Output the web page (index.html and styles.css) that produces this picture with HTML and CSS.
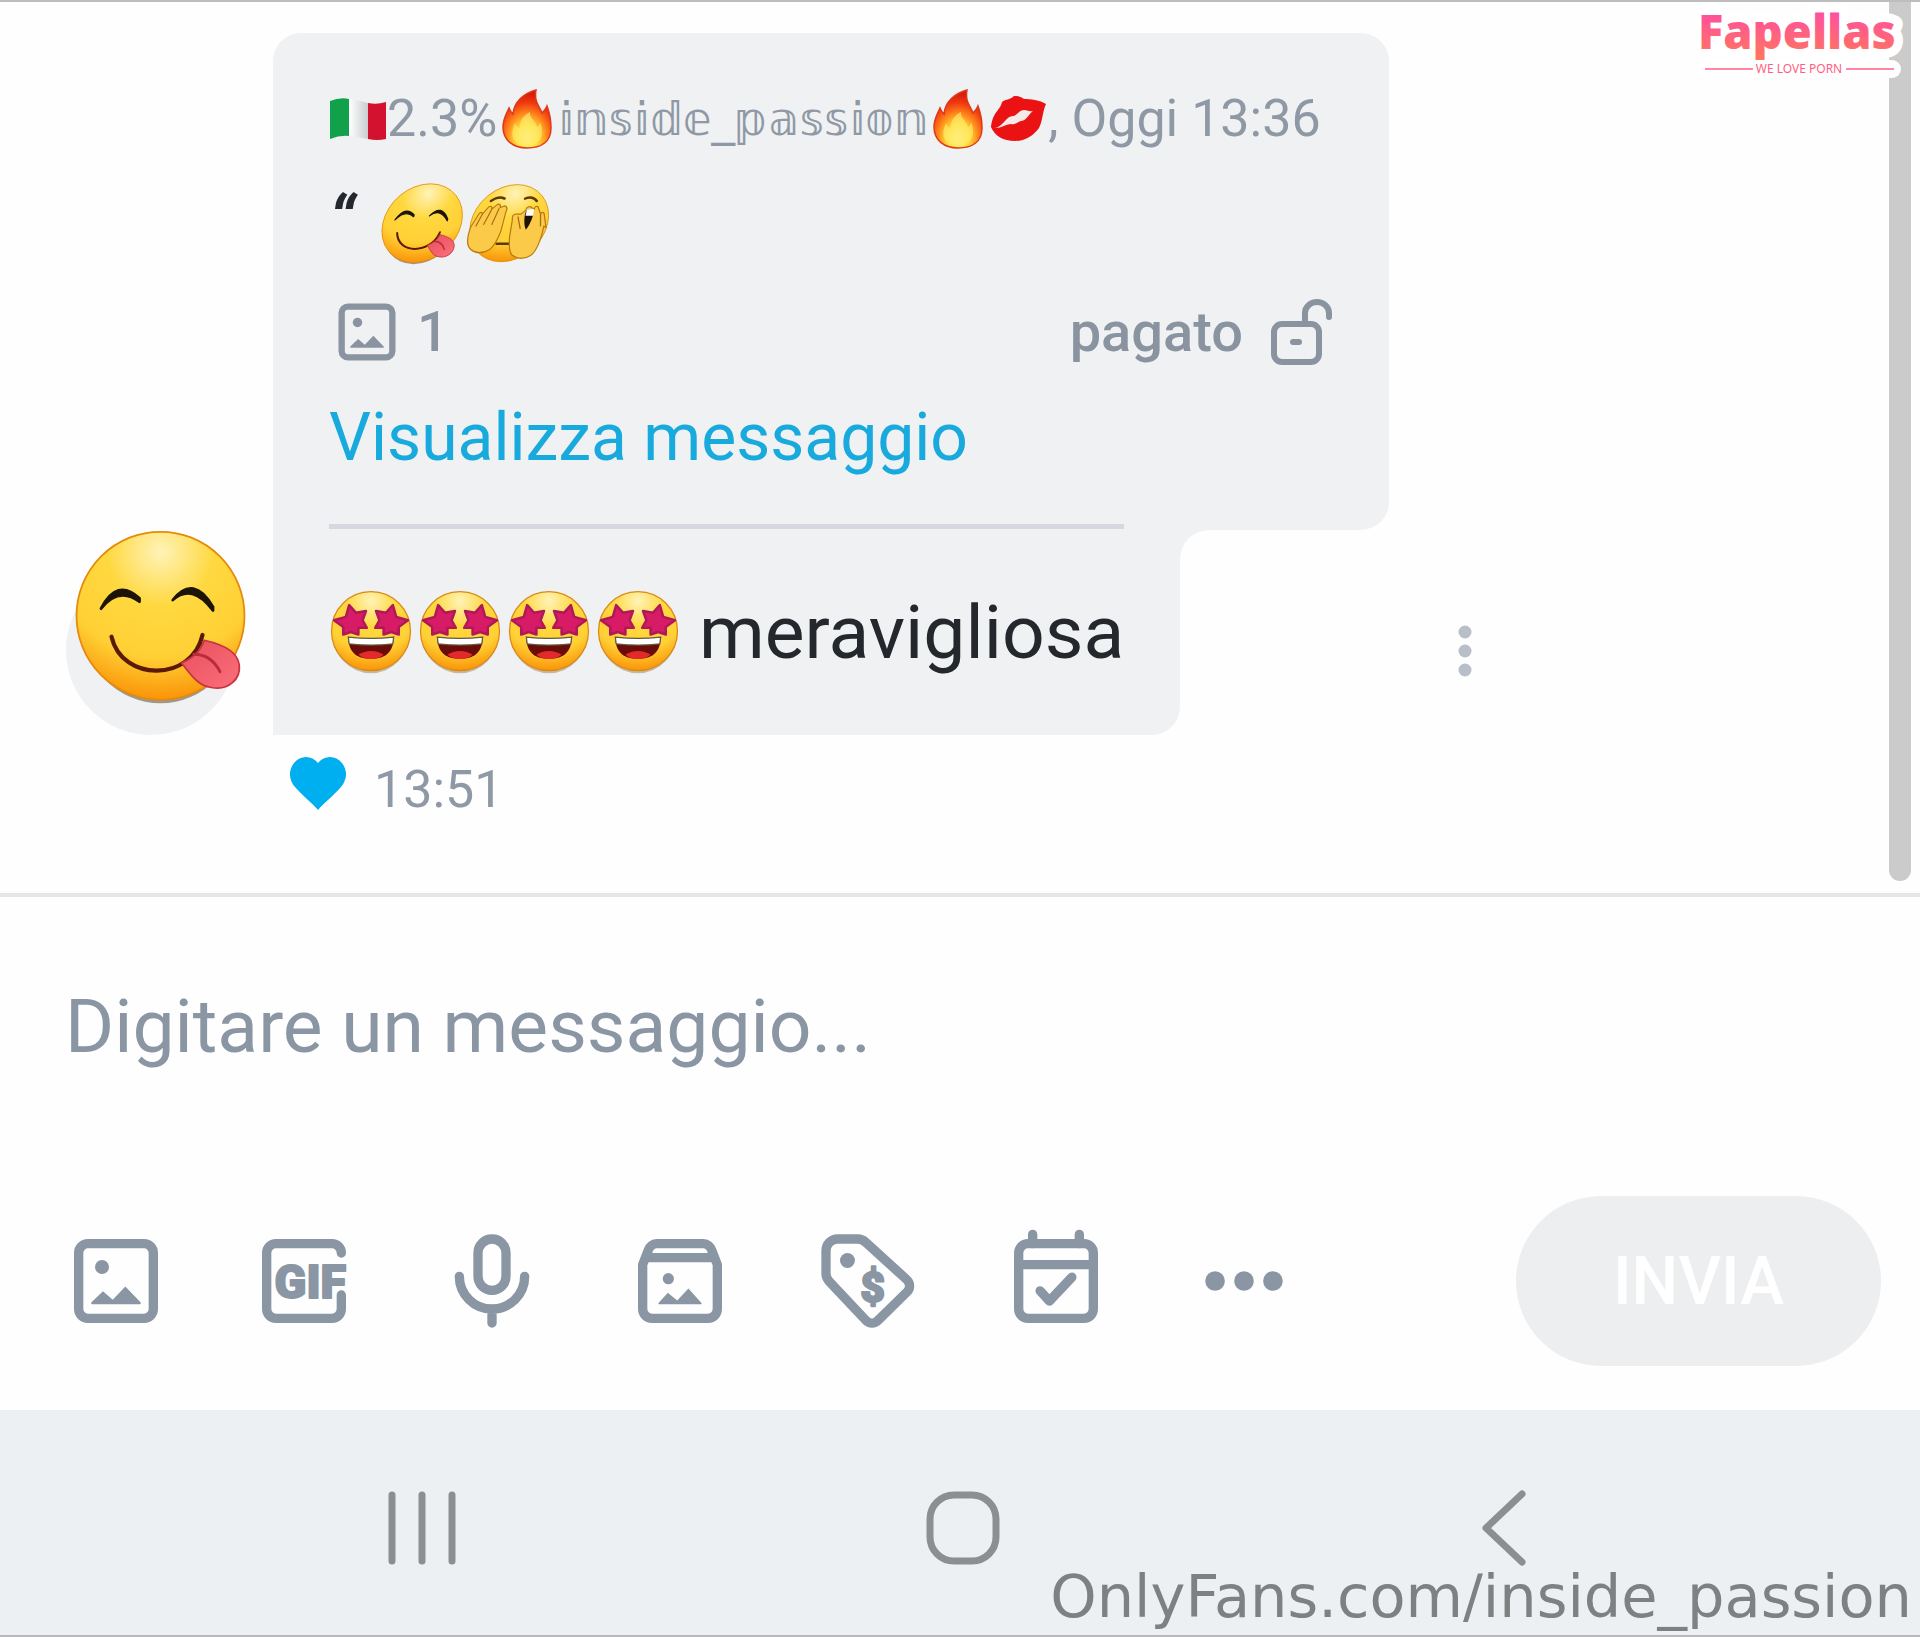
FILE: index.html
```html
<!DOCTYPE html>
<html lang="it">
<head>
  <meta charset="UTF-8">
  <meta name="viewport" content="width=device-width, initial-scale=1.0">
  <title>Messaggi</title>
  <link rel="stylesheet" href="styles.css">
</head>
<body>
  <!-- shared drawings -->
  <svg class="sprite" width="0" height="0" aria-hidden="true">
    <defs>
      <radialGradient id="skin" cx="50%" cy="12%" r="92%">
        <stop offset="0" stop-color="#fff3b8"/>
        <stop offset=".35" stop-color="#ffd83f"/>
        <stop offset=".68" stop-color="#ffd035"/>
        <stop offset="1" stop-color="#f98a00"/>
      </radialGradient>
      <linearGradient id="tongue" x1="0" y1="0" x2="1" y2="1">
        <stop offset="0" stop-color="#e8505c"/>
        <stop offset="1" stop-color="#fa6f7b"/>
      </linearGradient>
      <radialGradient id="flame" cx="50%" cy="82%" r="75%">
        <stop offset="0" stop-color="#fff7a8"/>
        <stop offset=".3" stop-color="#ffe03a"/>
        <stop offset=".55" stop-color="#ff8a1c"/>
        <stop offset=".8" stop-color="#f13a10"/>
        <stop offset="1" stop-color="#d81e0a"/>
      </radialGradient>
      <linearGradient id="logo-pink" x1="0" y1="0" x2="0" y2="1">
        <stop offset=".2" stop-color="#ff4f9f"/>
        <stop offset=".9" stop-color="#ff7560"/>
      </linearGradient>
      <linearGradient id="flag-white" x1="0" y1="0" x2="1" y2="0">
        <stop offset="0" stop-color="#ffffff"/>
        <stop offset="1" stop-color="#c9cdd0"/>
      </linearGradient>
    </defs>
    <symbol id="yum" viewBox="0 0 100 100">
      <ellipse cx="50" cy="52" rx="45" ry="47" fill="#3c2810" opacity=".45"/>
      <circle cx="50" cy="49" r="48" fill="url(#skin)" stroke="#e58a0b"/>
      <path d="M16 45q9-18 22-6l0 2q-12-9-22 4ZM57 40q12-15 23 4l0 2q-12-16-23-6Z" fill="#1c1406" stroke="#1c1406" stroke-width="1.6" stroke-linejoin="round"/>
      <path d="M22 61c6 26 46 26 52-1" fill="none" stroke="#5b1a08" stroke-width="2.400" stroke-linecap="round"/>
      <path d="M75 63c-2 6-6 10-13 13 5 6 9 13 17 14 10 2 17-5 16-13-1-8-11-12-20-14Z" fill="url(#tongue)" stroke="#c9323f"/>
      <path d="M69 71c7 0 12 4 15 10" fill="none" stroke="#b82c3c" stroke-width="1.6" stroke-linecap="round"/>
    </symbol>
    <symbol id="peek" viewBox="0 0 100 100">
      <circle cx="50" cy="49" r="47" fill="url(#skin)" stroke="#d8900f"/>
      <path d="M22 22q8-7 16-3M63 19q8-4 15 3" fill="none" stroke="#5b3a08" stroke-width="3" stroke-linecap="round"/>
      <path d="M40 74h17" stroke="#5b3a08" stroke-width="3" stroke-linecap="round"/>
      <path d="M4 54l7-17q3-3 4 1l6-9q4-2 4 3l6-6q4-1 4 4l5-2q5 1 3 8l-1 22q-3 18-9 23-12 8-23 0-9-6-6-27Z" fill="#fbca48" stroke="#b87a10" stroke-width="1.5"/>
      <path d="M15 38l-5 15M25 33l-6 18M34 31l-5 20" fill="none" stroke="#a86c0e" stroke-width="1.5"/>
      <path d="M96 54l-6-17q-3-3-4 1l-5-9q-4-2-4 3l-5-3q-5-1-5 4l-5 5-6 0q-5 0-3 7l1 20q2 18 8 23 12 8 23 0 8-8 8-35Z" fill="#fbca48" stroke="#b87a10" stroke-width="1.5"/>
      <path d="M86 38l3 15M59 41l6 15" fill="none" stroke="#a86c0e" stroke-width="1.5"/>
      <path d="M69 32q8 0 8 8-1 11-5 17-4-6-5-17 0-7 2-8Z" fill="#1c1406"/>
      <path d="M68 32h9v8h-9Z" fill="#fff"/>
    </symbol>
    <symbol id="starstruck" viewBox="0 0 100 100">
      <ellipse cx="50" cy="52" rx="46" ry="47" fill="#7a4a10" opacity=".35"/>
      <circle cx="50" cy="49" r="47" fill="url(#skin)" stroke="#d98a14" stroke-width="1.5"/>
      <path d="M23 56q27 4 54 0c0 20-12 26-27 26S23 76 23 56Z" fill="#6a0d0a"/>
      <path d="M35 77c8-6 22-6 30 0-8 7-22 7-30 0Z" fill="#e32a2a"/>
      <path d="M23 56q27 3 54 0l-1 8q-26 3-52 0Z" fill="#fff" stroke="#5f5a3a" stroke-width="1.5"/>
      <g fill="#d81b67" stroke="#b01858" stroke-width="3" stroke-linejoin="round">
        <path d="M24 18l8 9 12-2-4 11 5 9-10 0 0 8-9-3-9 3 0-9-11-8 14-4Z"/>
        <path d="M76 18l-8 9-12-2 4 11-5 9 10 0 0 8 9-3 9 3 0-9 11-8-14-4Z"/>
      </g>
    </symbol>
    <symbol id="fire" viewBox="0 0 60 60">
      <path d="M39 1c-2 12 3 15 6 23 2-2 4-4 5-7 3 8 4 14 4 22 0 14-10 20-24 20S6 51 6 38c0-8 3-12 6-19 1 3 2 4 4 6C17 13 27 4 39 1Z" fill="url(#flame)" stroke="#e0391a" stroke-width="1.5"/>
      <path d="M33 23c-1 6 6 9 7 15 2-1 3-3 3-5 5 12 1 23-13 23S12 47 18 34c1 3 3 5 5 5-1-7 4-13 10-16Z" fill="#ffe96a" opacity=".7"/>
    </symbol>
    <symbol id="picture" viewBox="0 0 24 24">
      <rect x="4" y="4" width="16" height="16" rx="2" fill="none" stroke="currentColor" stroke-width="2"/>
      <circle cx="9" cy="9" r="1.5" fill="currentColor"/>
      <path d="M7 17h10c.4 0 .4-.3.2-.5L14 13.2l-2.700 2.800-2.100-1.800-2.400 2.300c-.2.200-.2.500.2.500Z" fill="currentColor"/>
    </symbol>
  </svg>

  <main class="chat">
    <section class="thread">
      <div class="message">
        <svg class="avatar" viewBox="0 0 184 210" role="img" aria-label="Avatar">
          <circle cx="85" cy="125" r="85" fill="#f0f1f3"/>
          <use href="#yum" x="7" y="5" width="175" height="175"/>
        </svg>
        <div class="bubbles">
          <div class="quote">
            <div class="quote-author">
              <svg class="flag" viewBox="0 0 58 44" role="img" aria-label="Italia">
                <path d="M1 4Q11 0 20 2V39Q11 38 1 42Z" fill="#12a14b"/>
                <path d="M20 2Q29 3 39 6V42Q29 40 20 39Z" fill="url(#flag-white)"/>
                <path d="M39 6Q48 8 57 5V42Q48 44 39 42Z" fill="#d3122f"/>
              </svg>
              <span>2.3%</span>
              <svg class="mini"><use href="#fire"/></svg>
              <span class="outlined">𝕚𝕟𝕤𝕚𝕕𝕖_𝕡𝕒𝕤𝕤𝕚𝕠𝕟</span>
              <svg class="mini"><use href="#fire"/></svg>
              <svg class="mini" viewBox="0 0 60 60">
                <path d="M3 38C5 22 12 22 14 13c4-3 8-2 12-6 5 0 7 1 10 3 6 0 16 1 22 5-4 9-3 16-7 24-6 8-14 13-24 13-12 0-20-5-24-14Z" fill="#ea1212"/>
                <path d="M7 39c9-2 11-12 18-12 4 0 6-6 11-6 4 0 5 2 9 1-5 4-7 10-12 10-4 1-5 4-10 3-5 0-9 4-16 4Z" fill="#f6e9ea"/>
              </svg>
              <span>, Oggi 13:36</span>
            </div>
            <div class="quote-text">
              <b class="mark">“</b>
              <svg class="emoji slanted"><use href="#yum"/></svg>
              <svg class="emoji slanted"><use href="#peek"/></svg>
            </div>
            <div class="quote-meta">
              <span class="media">
                <svg class="media-icon"><use href="#picture"/></svg>
                <span>1</span>
              </span>
              <span class="paid">
                <span>pagato</span>
                <svg class="lock" viewBox="0 0 62 66" fill="none" stroke="currentColor" stroke-width="6" stroke-linecap="round">
                  <rect x="3" y="25" width="45" height="38" rx="8"/>
                  <path d="M34 24V14a12 11 0 0 1 24 0v4M22 43h6"/>
                </svg>
              </span>
            </div>
            <a class="quote-link" href="#">Visualizza messaggio</a>
          </div>
          <div class="reply">
            <div class="reply-text">
              <svg class="emoji"><use href="#starstruck"/></svg>
              <svg class="emoji"><use href="#starstruck"/></svg>
              <svg class="emoji"><use href="#starstruck"/></svg>
              <svg class="emoji"><use href="#starstruck"/></svg>
              <span class="word">meravigliosa</span>
            </div>
          </div>
        </div>
        <button class="more" type="button" aria-label="Altro">
          <svg viewBox="0 0 14 52" fill="currentColor">
            <circle cx="7" cy="7" r="6.500"/><circle cx="7" cy="26" r="6.500"/><circle cx="7" cy="45" r="6.500"/>
          </svg>
        </button>
      </div>
      <div class="status">
        <svg class="heart" viewBox="0 0 56 60">
          <path d="M28 11C34 3 46 3 52 11c6 8 5 17-1 24C44 43 34 51 28 58 22 51 12 43 5 35-1 28-2 19 4 11c6-8 18-8 24 0Z" fill="#00aff0"/>
        </svg>
        <time>13:51</time>
      </div>
      <div class="scrollbar"></div>
    </section>

    <form class="compose">
      <input class="compose-input" type="text" placeholder="Digitare un messaggio..." aria-label="Digitare un messaggio">
      <div class="toolbar">
        <div class="tools">
          <button type="button" aria-label="Immagine"><svg><use href="#picture"/></svg></button>
          <button type="button" aria-label="GIF">
            <svg class="line" viewBox="0 0 24 24">
              <path d="M20 6a2 2 0 0 0-2-2H6a2 2 0 0 0-2 2v12a2 2 0 0 0 2 2h12a2 2 0 0 0 2-2v-3"/>
              <text class="gif" x="5.700" y="15.700">GIF</text>
            </svg>
          </button>
          <button type="button" aria-label="Audio">
            <svg class="line" viewBox="0 0 24 24">
              <rect x="9" y="3" width="6" height="11" rx="3"/>
              <path d="M5 11a7 7 0 0 0 14 0M12 18v3"/>
            </svg>
          </button>
          <button type="button" aria-label="Archivio">
            <svg class="line" viewBox="0 0 24 24">
              <path d="M4 8.500 5.200 5.400A2 2 0 0 1 7 4h10a2 2 0 0 1 1.800 1.400L20 8.500V18a2 2 0 0 1-2 2H6a2 2 0 0 1-2-2ZM5 7h14"/>
              <circle class="solid" cx="9.500" cy="11.500" r="1.200"/>
              <path class="solid" d="M7.600 17h8.800c.3 0 .3-.2.1-.4l-2.700-3-2.400 2.600-2-1.700-1.900 2.100c-.2.200-.2.400.1.400Z"/>
            </svg>
          </button>
          <button type="button" aria-label="Prezzo">
            <svg class="line" viewBox="0 0 24 24">
              <path d="M3 5.500A2.500 2.500 0 0 1 5.500 3h4.300a2.500 2.500 0 0 1 1.700.7l8.800 8a1.800 1.800 0 0 1 .1 2.600l-6.300 6.200a1.800 1.800 0 0 1-2.500 0L3.700 12.100A2.500 2.500 0 0 1 3 10.400Z"/>
              <circle class="solid" cx="7.600" cy="7.600" r="1.600"/>
              <text class="dollar" x="13" y="16.400">$</text>
            </svg>
          </button>
          <button type="button" aria-label="Programma">
            <svg class="line" viewBox="0 0 24 24">
              <rect x="4" y="4" width="16" height="16" rx="2"/>
              <path d="M4 8.500h16M7 2v2M17 2v2M8.600 14.100l2 2.200 4.800-5.100"/>
            </svg>
          </button>
          <button type="button" aria-label="Altre opzioni">
            <svg viewBox="0 0 24 24" fill="currentColor">
              <circle cx="5.800" cy="12" r="2.100"/><circle cx="12" cy="12" r="2.100"/><circle cx="18.200" cy="12" r="2.100"/>
            </svg>
          </button>
        </div>
        <button class="send" type="submit" disabled>INVIA</button>
      </div>
    </form>

    <nav class="system-nav">
      <button type="button" aria-label="Recenti">
        <svg viewBox="0 0 76 76"><path d="M8 5v66M38 5v66M68 5v66"/></svg>
      </button>
      <button type="button" aria-label="Home">
        <svg viewBox="0 0 76 76"><rect x="5" y="5" width="66" height="66" rx="24"/></svg>
      </button>
      <button type="button" aria-label="Indietro">
        <svg viewBox="0 0 76 76"><path d="M56 4 20 38l36 34"/></svg>
      </button>
    </nav>
  </main>

  <svg class="site-logo" viewBox="0 0 220 84" role="img" aria-label="Fapellas">
    <path d="M7 69h187" stroke="#fff" stroke-width="18" stroke-linecap="round"/>
    <text class="brand" x="0" y="49" fill="url(#logo-pink)">Fapellas</text>
    <path d="M7 69h48M148 69h48" stroke="#ff5f83" stroke-width="1.500"/>
    <text class="tagline" x="101" y="73" fill="#ff5f83">WE LOVE PORN</text>
  </svg>
  <div class="watermark">OnlyFans.com/inside_passion</div>
</body>
</html>
```
FILE: styles.css
```css
* {
  box-sizing: border-box;
}
body {
  margin: 0;
  position: relative;
  font-family: Roboto, sans-serif;
  color: #24272b;
  background-color: #fefefe;
}
button {
  padding: 0;
  border: none;
  background: none;
  font-family: inherit;
  color: inherit;
  cursor: pointer;
}
svg {
  display: block;
}
.sprite {
  position: absolute;
}
.chat {
  display: flex;
  flex-direction: column;
  min-height: 100vh;
  border-top: 2px solid #bdbdbd;
  border-bottom: 2px solid #b6b8bb;
}

/* conversation */
.thread {
  position: relative;
  padding: 31px 0 65px 66px;
  border-bottom: 4px solid #e5e6e8;
}
.message {
  display: flex;
  align-items: flex-end;
}
.avatar {
  width: 184px;
  height: 210px;
  margin-right: 23px;
  flex-shrink: 0;
}
.bubbles {
  width: 100%;
  max-width: 1116px;
}
.quote {
  display: flex;
  flex-direction: column;
  gap: 33px;
  padding: 56px 56px 52px;
  background-color: #f0f1f3;
  border-radius: 28px 28px 28px 0;
}
.quote-author {
  display: flex;
  align-items: center;
  font-size: 52px;
  line-height: 60px;
  color: #8f99a5;
  white-space: pre;
}
.flag {
  width: 58px;
  height: 44px;
}
.mini {
  width: 60px;
  height: 60px;
}
.outlined {
  font-family: "DejaVu Sans", sans-serif;
  font-size: 47px;
}
.quote-text {
  display: flex;
  align-items: center;
  height: 84px;
}
.mark {
  width: 52px;
  font-size: 66px;
  font-style: italic;
  line-height: 78px;
  align-self: flex-start;
}
.emoji {
  width: 84px;
  height: 84px;
  margin-right: 5px;
}
.slanted {
  width: 82px;
  transform: skewX(-12deg);
}
.quote-meta {
  display: flex;
  justify-content: space-between;
  align-items: center;
  height: 66px;
  font-size: 56px;
  font-weight: 500;
  color: #8a94a1;
}
.media, .paid {
  display: flex;
  align-items: center;
}
.media {
  gap: 12px;
}
.media-icon {
  width: 76px;
  height: 76px;
}
.paid {
  gap: 28px;
}
.lock {
  width: 62px;
  height: 66px;
}
.quote-link {
  font-size: 66px;
  line-height: 80px;
  color: #18a9dd;
  text-decoration: none;
}
.reply {
  position: relative;
  width: fit-content;
  margin-top: -6px;
  padding: 0 56px;
  background-color: #f0f1f3;
  border-radius: 0 0 28px 0;
}
.reply::after {
  content: "";
  position: absolute;
  left: 100%;
  top: 6px;
  width: 28px;
  height: 28px;
  background: radial-gradient(circle at 100% 100%, transparent 27px, #f0f1f3 28px);
}
.reply-text {
  display: flex;
  align-items: center;
  height: 211px;
  border-top: 5px solid #d6d8e0;
}
.word {
  margin-left: 14px;
  font-size: 75px;
}
.more {
  display: flex;
  justify-content: center;
  align-items: center;
  width: 64px;
  height: 168px;
  margin-left: 44px;
  color: #b8bfc9;
}
.more svg {
  width: 14px;
  height: 52px;
}
.status {
  display: flex;
  align-items: flex-start;
  gap: 28px;
  margin: 17px 0 0 224px;
  font-size: 52px;
  line-height: 76px;
  color: #8f99a5;
}
.heart {
  width: 56px;
  height: 60px;
}
.scrollbar {
  position: absolute;
  top: 0;
  right: 9px;
  bottom: 12px;
  width: 22px;
  background-color: #cbcbcb;
  border-radius: 0 0 11px 11px;
}

/* message form */
.compose {
  padding: 79px 39px 44px 60px;
}
.compose-input {
  display: block;
  width: 100%;
  height: 100px;
  margin-bottom: 120px;
  padding: 0 0 0 5px;
  border: none;
  outline: none;
  background: none;
  font-family: inherit;
  font-size: 75px;
  color: #24272b;
}
.compose-input::placeholder {
  color: #8a96a3;
  opacity: 1;
}
.toolbar {
  display: flex;
  justify-content: space-between;
  align-items: center;
}
.tools {
  display: flex;
  gap: 76px;
  color: #8a96a3;
}
.tools svg {
  width: 112px;
  height: 112px;
}
.line {
  fill: none;
  stroke: currentColor;
  stroke-width: 2;
  stroke-linecap: round;
  stroke-linejoin: round;
}
.solid, .gif, .dollar {
  fill: currentColor;
  stroke: none;
}
.gif {
  font-size: 10px;
  font-weight: 900;
  stroke: currentColor;
  stroke-width: 0.4px;
}
.dollar {
  font-size: 9px;
  font-weight: 900;
  text-anchor: middle;
  stroke: currentColor;
  stroke-width: 0.5px;
}
.send {
  width: 365px;
  height: 170px;
  border-radius: 85px;
  background-color: #edeef0;
  color: #fff;
  font-size: 66px;
  font-weight: 500;
}

/* phone buttons */
.system-nav {
  display: flex;
  flex: 1;
  min-height: 225px;
  padding: 10px 146px 0 152px;
  background-color: #ecf0f3;
}
.system-nav button {
  display: flex;
  flex: 1;
  justify-content: center;
  align-items: center;
}
.system-nav svg {
  width: 76px;
  height: 76px;
  fill: none;
  stroke: #8d8e90;
  stroke-width: 7;
  stroke-linecap: round;
  stroke-linejoin: round;
}

/* overlays */
.site-logo {
  position: absolute;
  top: 0;
  right: 2px;
  width: 220px;
  height: 84px;
}
.brand {
  font-family: "Noto Sans", sans-serif;
  font-size: 47px;
  font-weight: 900;
  stroke: #fff;
  stroke-width: 18px;
  stroke-linejoin: round;
  paint-order: stroke;
}
.tagline {
  font-family: "Noto Sans", sans-serif;
  font-size: 12px;
  text-anchor: middle;
}
.watermark {
  position: absolute;
  right: 8px;
  bottom: 5px;
  font-family: "DejaVu Sans", sans-serif;
  font-size: 59px;
  line-height: 70px;
  color: #7f8081;
}
```
